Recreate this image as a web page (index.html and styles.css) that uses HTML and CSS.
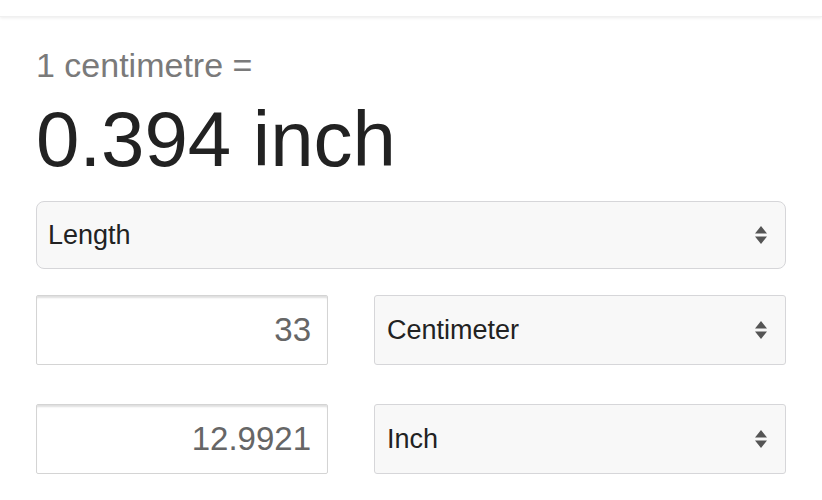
FILE: index.html
```html
<!DOCTYPE html>
<html lang="en">
<head>
  <meta charset="UTF-8" />
  <title>Unit Converter</title>
  <link rel="stylesheet" href="styles.css">
</head>
<body>
  <div class="topbar"></div>

  <div class="converter">
    <div class="result-from">1 centimetre =</div>
    <div class="result-to">0.394 inch</div>

    <div class="select-wrap wide">
      <select class="select big">
        <option>Length</option>
      </select>
      <svg class="arrows" width="12" height="20" viewBox="0 0 12 20"><path d="M0 8.5 6 1l6 7.5z M0 11.5h12L6 19z" fill="#555"/></svg>
    </div>

    <div class="row">
      <input class="amount" type="text" value="33">
      <div class="select-wrap">
        <select class="select">
          <option>Centimeter</option>
        </select>
        <svg class="arrows" width="12" height="20" viewBox="0 0 12 20"><path d="M0 8.5 6 1l6 7.5z M0 11.5h12L6 19z" fill="#555"/></svg>
      </div>
    </div>

    <div class="row">
      <input class="amount" type="text" value="12.9921">
      <div class="select-wrap">
        <select class="select">
          <option>Inch</option>
        </select>
        <svg class="arrows" width="12" height="20" viewBox="0 0 12 20"><path d="M0 8.5 6 1l6 7.5z M0 11.5h12L6 19z" fill="#555"/></svg>
      </div>
    </div>
  </div>
</body>
</html>
```

FILE: styles.css
```css
body {
  font-family: 'Liberation Sans', Arial, sans-serif;
  background: #fff;
  margin: 0;
  color: #222;
}
.topbar {
  height: 16px;
  background: #fff;
  box-shadow: 0 1px 3px rgba(0, 0, 0, 0.08);
  border-bottom: 1px solid #f0f0f0;
}
.converter {
  padding: 28px 36px 0;
}
.result-from {
  font-size: 34px;
  line-height: 40px;
  color: #7a7a7a;
}
.result-to {
  font-size: 78px;
  line-height: 80px;
  color: #222;
  margin-top: 14px;
}
.select-wrap {
  position: relative;
}
.select-wrap.wide {
  margin-top: 22px;
}
.select {
  display: block;
  width: 100%;
  height: 70px;
  -webkit-appearance: none;
  appearance: none;
  background: #f8f8f8;
  border: 1px solid #d6d6d9;
  border-radius: 3px;
  padding: 0 40px 0 12px;
  font-family: inherit;
  font-size: 27px;
  color: #222;
  outline: none;
}
.select.big {
  height: 68px;
  border-radius: 8px;
  padding-left: 11px;
}
.arrows {
  position: absolute;
  right: 19px;
  top: 50%;
  margin-top: -10px;
  pointer-events: none;
}
.row {
  display: grid;
  grid-template-columns: 292px 1fr;
  gap: 46px;
  margin-top: 26px;
}
.row + .row {
  margin-top: 39px;
}
.amount {
  box-sizing: border-box;
  width: 100%;
  height: 70px;
  border: 1px solid #d4d4d4;
  border-radius: 2px;
  box-shadow: inset 0 3px 2px -1px rgba(0, 0, 0, 0.13);
  padding: 0 16px;
  text-align: right;
  font-family: inherit;
  font-size: 33px;
  color: #666;
  background: #fff;
  outline: none;
}
```
